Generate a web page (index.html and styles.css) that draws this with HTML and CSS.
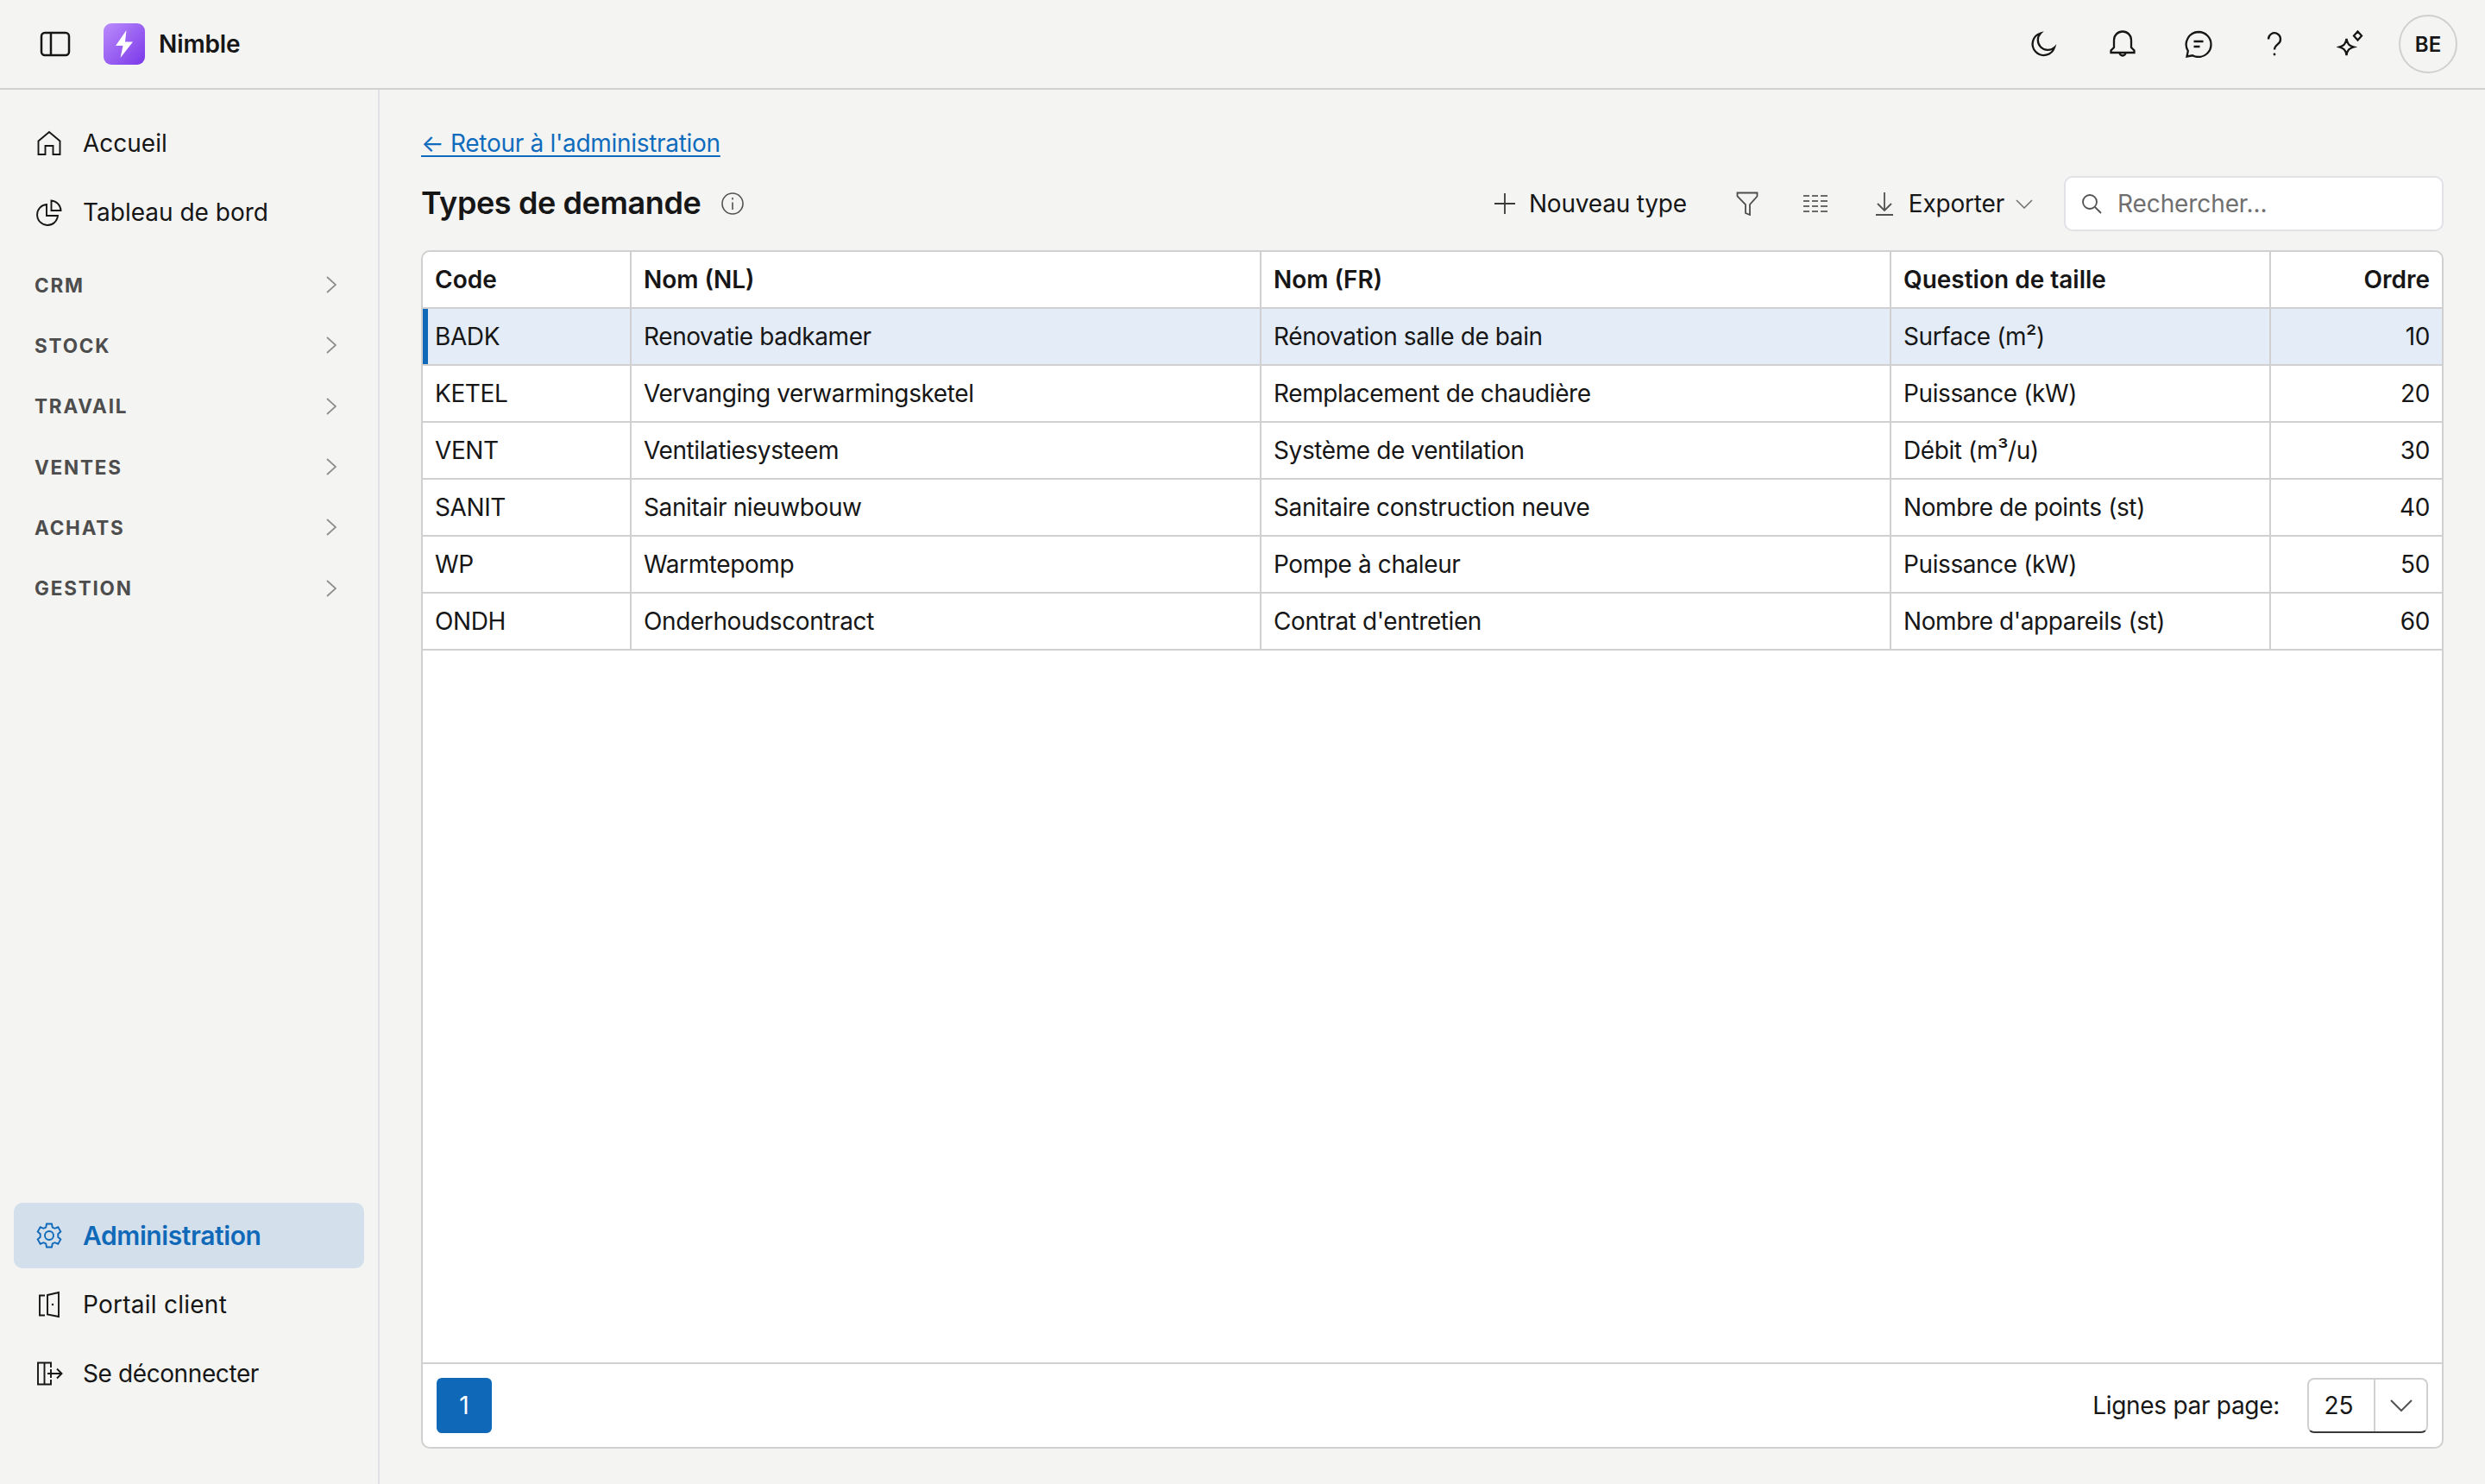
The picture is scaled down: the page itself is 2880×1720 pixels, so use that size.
FILE: index.html
```html
<!DOCTYPE html>
<html lang="fr">
<head>
    <meta charset="UTF-8">
    <title>Types de demande</title>
    <link rel="stylesheet" href="styles.css">
</head>
<body>
    <header class="topbar">
        <svg class="panel-icon" width="36" height="30" viewBox="0 0 36 30"><rect x="2" y="2" width="32" height="26" rx="4"/><path d="M13 2v26"/></svg>
        <div class="logo">
            <svg width="24" height="34" viewBox="0 0 24 34"><path d="M14.500 1 2 19h8.500L7.500 33 22 14.500h-9z"/></svg>
        </div>
        <span class="brand">Nimble</span>
        <div class="topbar-actions">
            <svg class="top-icon moon" viewBox="0 0 32 32"><path d="M13 3.500A13 13 0 1 0 29 20 11.500 11.500 0 0 1 13 3.500z"/></svg>
            <svg class="top-icon" viewBox="0 0 32 32"><path d="M2.500 26h27v-2.500l-3.500-3.500V11.500a10 10 0 0 0-20 0V20l-3.500 3.500zM12.500 26a3.500 3.500 0 0 0 7 0"/></svg>
            <svg class="top-icon" viewBox="0 0 32 32"><path d="M16 2a14.500 14.500 0 0 1 0 29c-2.500 0-5-.5-7-1.700L2.500 30.500l1.300-6.500A14.500 14.500 0 0 1 16 2zM10.500 13h11M10.500 19h7"/></svg>
            <svg class="top-icon" viewBox="0 0 32 32"><path d="M9 10.500a7 7 0 1 1 11 5.500c-2.500 2-4 3-4 6.500"/><circle class="dot" cx="16" cy="28" r="1.400"/></svg>
            <svg class="top-icon" viewBox="0 0 32 32"><path d="M11.500 10c1 6 3 8 8.500 9.500-5.500 1.500-7.500 3.500-8.500 9.500-1-6-3-8-8.500-9.500C8.500 18 10.500 16 11.500 10zM24.500 1.500l4.500 5-4.500 5-4.500-5z"/></svg>
            <div class="avatar">BE</div>
        </div>
    </header>

    <div class="layout">
        <aside class="sidebar">
            <nav class="nav-main">
                <a class="nav-item">
                    <svg class="nav-icon" viewBox="0 0 32 32"><path d="M3.500 29V13.500L16 3l12.500 10.500V29H20.500V19h-9v10z"/></svg>
                    <span>Accueil</span>
                </a>
                <a class="nav-item">
                    <svg class="nav-icon" viewBox="0 0 32 32"><path d="M13 7a12 12 0 1 0 13 13H13zM18.500 2.500a12 12 0 0 1 11 11.500h-11z"/></svg>
                    <span>Tableau de bord</span>
                </a>
            </nav>

            <div class="nav-groups">
                <div class="nav-group"><span>CRM</span><svg class="group-chevron" viewBox="0 0 12 20"><path d="m1 1 10 9-10 9"/></svg></div>
                <div class="nav-group"><span>STOCK</span><svg class="group-chevron" viewBox="0 0 12 20"><path d="m1 1 10 9-10 9"/></svg></div>
                <div class="nav-group"><span>TRAVAIL</span><svg class="group-chevron" viewBox="0 0 12 20"><path d="m1 1 10 9-10 9"/></svg></div>
                <div class="nav-group"><span>VENTES</span><svg class="group-chevron" viewBox="0 0 12 20"><path d="m1 1 10 9-10 9"/></svg></div>
                <div class="nav-group"><span>ACHATS</span><svg class="group-chevron" viewBox="0 0 12 20"><path d="m1 1 10 9-10 9"/></svg></div>
                <div class="nav-group"><span>GESTION</span><svg class="group-chevron" viewBox="0 0 12 20"><path d="m1 1 10 9-10 9"/></svg></div>
            </div>

            <nav class="nav-bottom">
                <a class="nav-item active">
                    <svg class="nav-icon" viewBox="0 0 32 32"><path d="M13 2.500h6l.8 4 2.700 1.300 3.800-1.500 3 5.200-3 2.700v3.600l3 2.700-3 5.200-3.800-1.500-2.700 1.300-.8 4h-6l-.8-4-2.700-1.300-3.800 1.500-3-5.200 3-2.700v-3.600l-3-2.700 3-5.200 3.800 1.500 2.700-1.300z"/><circle cx="16" cy="16" r="5"/></svg>
                    <span>Administration</span>
                </a>
                <a class="nav-item portal">
                    <svg class="nav-icon" viewBox="0 0 32 32"><path d="M11 5.500H5v23h6M14 5l13-3v28l-13-2.500zM14 5v22.500"/><circle class="dot" cx="20" cy="16" r="1.200"/></svg>
                    <span>Portail client</span>
                </a>
                <a class="nav-item logout">
                    <svg class="nav-icon" viewBox="0 0 32 32"><path d="M18 9V3.500H3v25h15V23M10.500 3.500v25M14 16h16M25 10.500l5.500 5.500-5.500 5.500M18 11v10"/></svg>
                    <span>Se déconnecter</span>
                </a>
            </nav>
        </aside>

        <main class="content">
            <a class="back-link">← Retour à l'administration</a>

            <div class="toolbar">
                <h1>Types de demande</h1>
                <svg class="info-icon" viewBox="0 0 28 28"><circle cx="14" cy="14" r="12"/><path d="M14 12.500V21M14 7v2.500"/></svg>
                <div class="toolbar-actions">
                    <button class="tool-btn new-btn">
                        <svg width="24" height="24" viewBox="0 0 24 24"><path d="M12 0v24M0 12h24"/></svg>
                        Nouveau type
                    </button>
                    <svg class="funnel" width="26" height="28" viewBox="0 0 26 28"><path d="M1.500 1.500h23v4L16 15v12l-5-2V15L1.500 5.500z"/></svg>
                    <svg class="grid-icon" width="28" height="24" viewBox="0 0 28 24"><path d="M0 3h7M10 3h7M20 3h8M0 9h7M10 9h7M20 9h8M0 15h7M10 15h7M20 15h8M0 21h7M10 21h7M20 21h8"/></svg>
                    <button class="tool-btn export-btn">
                        <svg width="20" height="28" viewBox="0 0 20 28"><path d="M10 1v21M2 14l8 8 8-8M0 27h20"/></svg>
                        Exporter
                        <svg class="export-chevron" width="20" height="11" viewBox="0 0 20 11"><path d="m1 1 9 9 9-9"/></svg>
                    </button>
                    <div class="search">
                        <svg width="24" height="24" viewBox="0 0 24 24"><circle cx="10" cy="10" r="8"/><path d="m16 16 7 7"/></svg>
                        <span>Rechercher...</span>
                    </div>
                </div>
            </div>

            <div class="table-card">
                <table>
                    <colgroup>
                        <col class="col-code">
                        <col class="col-nl">
                        <col class="col-fr">
                        <col class="col-size">
                        <col>
                    </colgroup>
                    <thead>
                        <tr>
                            <th>Code</th>
                            <th>Nom (NL)</th>
                            <th>Nom (FR)</th>
                            <th>Question de taille</th>
                            <th class="num">Ordre</th>
                        </tr>
                    </thead>
                    <tbody>
                        <tr class="selected">
                            <td>BADK</td>
                            <td>Renovatie badkamer</td>
                            <td>Rénovation salle de bain</td>
                            <td>Surface (m²)</td>
                            <td class="num">10</td>
                        </tr>
                        <tr>
                            <td>KETEL</td>
                            <td>Vervanging verwarmingsketel</td>
                            <td>Remplacement de chaudière</td>
                            <td>Puissance (kW)</td>
                            <td class="num">20</td>
                        </tr>
                        <tr>
                            <td>VENT</td>
                            <td>Ventilatiesysteem</td>
                            <td>Système de ventilation</td>
                            <td>Débit (m³/u)</td>
                            <td class="num">30</td>
                        </tr>
                        <tr>
                            <td>SANIT</td>
                            <td>Sanitair nieuwbouw</td>
                            <td>Sanitaire construction neuve</td>
                            <td>Nombre de points (st)</td>
                            <td class="num">40</td>
                        </tr>
                        <tr>
                            <td>WP</td>
                            <td>Warmtepomp</td>
                            <td>Pompe à chaleur</td>
                            <td>Puissance (kW)</td>
                            <td class="num">50</td>
                        </tr>
                        <tr>
                            <td>ONDH</td>
                            <td>Onderhoudscontract</td>
                            <td>Contrat d'entretien</td>
                            <td>Nombre d'appareils (st)</td>
                            <td class="num">60</td>
                        </tr>
                    </tbody>
                </table>

                <div class="pager">
                    <button class="page-btn">1</button>
                    <span class="pager-label">Lignes par page:</span>
                    <div class="page-size">
                        <span class="page-size-value">25</span>
                        <span class="page-size-arrow">
                            <svg width="26" height="14" viewBox="0 0 26 14"><path d="m1 1 12 12L25 1"/></svg>
                        </span>
                    </div>
                </div>
            </div>
        </main>
    </div>
</body>
</html>
```

FILE: styles.css
```css
* {
    box-sizing: border-box;
}

body {
    margin: 0;
    height: 100vh;
    display: flex;
    flex-direction: column;
    background-color: #f4f4f3;
    color: #161616;
    font-family: "Inter", sans-serif;
    font-size: 28px;
    overflow: hidden;
}

svg {
    fill: none;
    stroke: currentColor;
    flex-shrink: 0;
}

.dot {
    fill: currentColor;
    stroke: none;
}

/* top bar */
.topbar {
    height: 104px;
    flex-shrink: 0;
    display: flex;
    align-items: center;
    padding: 0 32px 0 46px;
    border-bottom: 2px solid #d0d0d0;
}

.panel-icon {
    stroke-width: 2.500;
    margin-right: 38px;
}

.logo {
    width: 48px;
    height: 48px;
    border-radius: 9px;
    background: linear-gradient(135deg, #bb8cfd, #7a38e8);
    display: flex;
    align-items: center;
    justify-content: center;
    margin-right: 16px;
}

.logo svg {
    fill: #fff;
    stroke: none;
}

.brand {
    font-weight: 600;
    font-size: 28px;
    letter-spacing: -0.100px;
}

.topbar-actions {
    margin-left: auto;
    display: flex;
    align-items: center;
}

.top-icon {
    width: 32px;
    height: 32px;
    stroke-width: 2.300;
    margin-right: 56px;
}

.top-icon.moon {
    margin-right: 60px;
}

.top-icon:nth-child(5) {
    margin-right: 40px;
}

.avatar {
    width: 68px;
    height: 68px;
    border: 2px solid #d0d0d0;
    border-radius: 50%;
    display: flex;
    align-items: center;
    justify-content: center;
    font-size: 24px;
    font-weight: 600;
}

/* sidebar */
.layout {
    flex: 1;
    min-height: 0;
    display: flex;
}

.sidebar {
    width: 440px;
    flex-shrink: 0;
    display: flex;
    flex-direction: column;
    padding: 24px 16px 90px;
    border-right: 2px solid #e0e2e6;
}

.nav-main,
.nav-bottom {
    display: flex;
    flex-direction: column;
    gap: 4px;
}

.nav-bottom {
    margin-top: auto;
}

.nav-item {
    height: 76px;
    display: flex;
    align-items: center;
    gap: 23px;
    padding-left: 25px;
    border-radius: 10px;
    font-size: 28px;
}

.nav-icon {
    width: 32px;
    height: 32px;
    stroke-width: 1.900;
    flex-shrink: 0;
}

.nav-item.active {
    background-color: #d3e0eb;
    color: #0f69b8;
    font-size: 30px;
    font-weight: 600;
    letter-spacing: -0.400px;
}

.nav-item.portal {
    letter-spacing: 0.250px;
}

.nav-item.logout {
    letter-spacing: -0.400px;
}

.nav-groups {
    margin-top: 11px;
    display: flex;
    flex-direction: column;
}

.nav-group {
    height: 70.300px;
    display: flex;
    align-items: center;
    justify-content: space-between;
    padding: 0 32px 0 24px;
    color: #4d4d4d;
    font-size: 22.500px;
    font-weight: 700;
    letter-spacing: 1.800px;
}

.group-chevron {
    width: 12px;
    height: 20px;
    color: #8d8d8d;
    stroke-width: 1.700;
}

/* content */
.content {
    flex: 1;
    min-width: 0;
    display: flex;
    flex-direction: column;
    padding: 44px 48px 41px 48px;
}

.back-link {
    line-height: 36px;
    color: #0f6cbd;
    letter-spacing: -0.300px;
    text-decoration: underline;
    text-underline-offset: 4px;
    align-self: flex-start;
}

.toolbar {
    display: flex;
    align-items: center;
    height: 64px;
    margin: 20px 0 22px;
}

h1 {
    margin: 0 0 3px;
    font-size: 36px;
    font-weight: 600;
    letter-spacing: -0.400px;
}

.info-icon {
    width: 28px;
    height: 28px;
    margin-left: 23px;
    color: #525252;
    stroke-width: 1.600;
}

.toolbar-actions {
    margin-left: auto;
    display: flex;
    align-items: center;
}

.tool-btn {
    display: flex;
    align-items: center;
    padding: 0;
    border: 0;
    background: none;
    color: inherit;
    font: inherit;
    letter-spacing: -0.200px;
}

.new-btn {
    gap: 16px;
    margin-right: 57px;
}

.new-btn svg {
    color: #393939;
    stroke-width: 1.800;
}

.funnel {
    color: #4d4d4d;
    stroke-width: 1.800;
    margin-right: 52px;
}

.grid-icon {
    color: #6a6a6a;
    stroke-width: 2;
    margin-right: 56px;
}

.export-btn {
    gap: 18px;
    margin-right: 36px;
}

.export-btn svg:first-child {
    color: #525252;
    stroke-width: 1.800;
}

.export-chevron {
    color: #6f6f6f;
    stroke-width: 1.500;
    margin-left: -5px;
}

.search {
    width: 440px;
    height: 64px;
    background-color: #fff;
    border: 2px solid #e0e2e6;
    border-radius: 10px;
    display: flex;
    align-items: center;
    gap: 18px;
    padding-left: 18px;
    color: #6f6f6f;
    letter-spacing: -0.100px;
}

.search svg {
    color: #525252;
    stroke-width: 1.800;
}

/* table */
.table-card {
    flex: 1;
    min-height: 0;
    display: flex;
    flex-direction: column;
    background-color: #fff;
    border: 2px solid #d0d0d0;
    border-radius: 10px;
    overflow: hidden;
}

table {
    width: 100%;
    border-collapse: separate;
    border-spacing: 0;
    table-layout: fixed;
}

.col-code {
    width: 242px;
}

.col-nl,
.col-fr {
    width: 730px;
}

.col-size {
    width: 440px;
}

th,
td {
    height: 66px;
    padding: 0 14px;
    text-align: left;
    border-right: 2px solid #d0d0d0;
    border-bottom: 2px solid #d0d0d0;
}

td {
    letter-spacing: -0.400px;
}

th:last-child,
td:last-child {
    border-right: 0;
}

th {
    font-weight: 600;
}

.num {
    text-align: right;
}

tr.selected td {
    background-color: #e3ecf7;
}

tr.selected td:first-child {
    box-shadow: inset 6px 0 0 #0f69b8;
}

.pager {
    margin-top: auto;
    height: 98px;
    display: flex;
    align-items: center;
    padding: 0 16px;
    border-top: 2px solid #d0d0d0;
}

.page-btn {
    width: 64px;
    height: 64px;
    border: 0;
    border-radius: 6px;
    background-color: #0f69b8;
    color: #fff;
    font: inherit;
}

.pager-label {
    margin-left: auto;
    margin-right: 32px;
    letter-spacing: -0.300px;
}

.page-size {
    width: 140px;
    height: 64px;
    display: flex;
    border: 2px solid #d0d0d0;
    border-bottom-color: #393939;
    border-radius: 8px;
}

.page-size-value {
    width: 77px;
    padding-right: 6px;
    display: flex;
    align-items: center;
    justify-content: center;
    border-right: 2px solid #d0d0d0;
}

.page-size-arrow {
    flex: 1;
    display: flex;
    align-items: center;
    justify-content: center;
    color: #525252;
    stroke-width: 2;
}
```
